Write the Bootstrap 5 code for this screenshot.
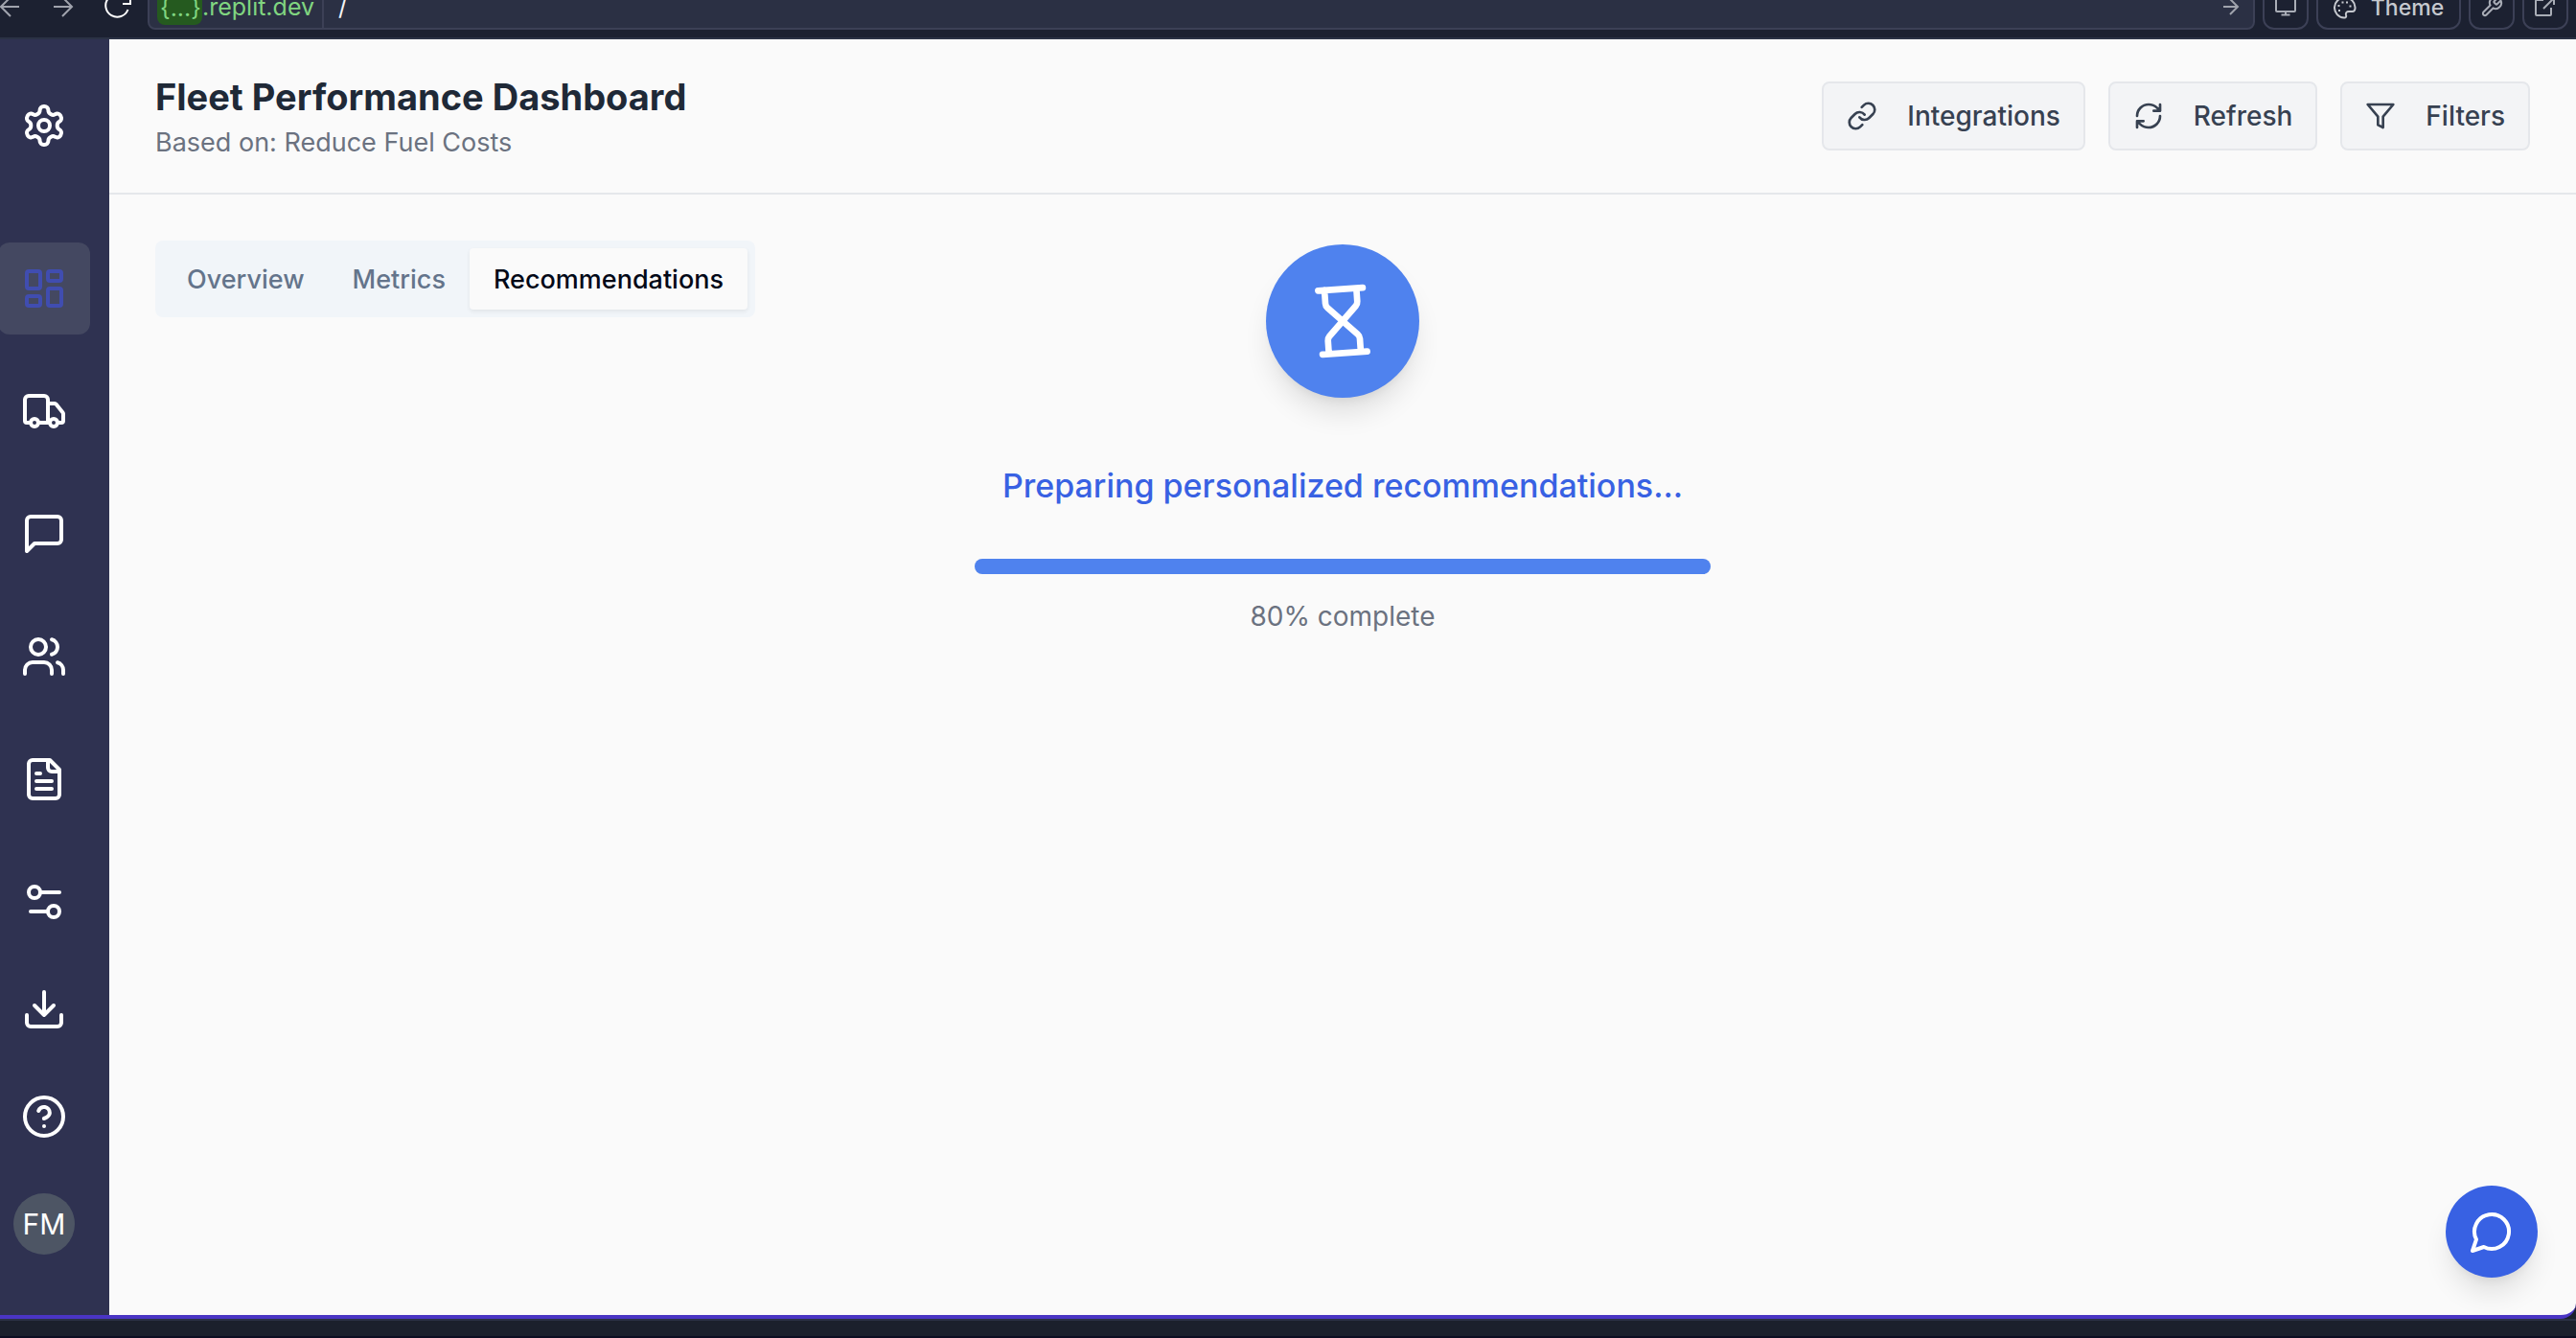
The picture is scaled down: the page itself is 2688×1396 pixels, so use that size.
<!DOCTYPE html>
<html lang="en">
<head>
<meta charset="utf-8">
<meta name="viewport" content="width=device-width, initial-scale=1">
<title>Fleet Performance Dashboard</title>
<link href="https://cdn.jsdelivr.net/npm/bootstrap@5.3.0/dist/css/bootstrap.min.css" rel="stylesheet">
<style>
  body { font-family: Inter, "Liberation Sans", sans-serif; background: #1b202c; }
  svg { fill: none; stroke: currentColor; stroke-width: 2; stroke-linecap: round; stroke-linejoin: round; flex-shrink: 0; }
  button { background: none; border: 0; padding: 0; }

  /* browser bar, scrolled partly out of view */
  .browser-bar { height: 41px; background: #1c2131; border-bottom: 2px solid #2b3245; color: #a9adb6; }
  .browser-row { height: 48px; margin-top: -17px; gap: 8px; padding-right: 8px; }
  .browser-nav { width: 146px; gap: 32px; }
  .browser-nav button { width: 24px; color: #a0a3ad; }
  .browser-nav .reload { color: #fff; }
  .browser-bar svg { width: 24px; height: 24px; stroke-width: 2; stroke-linecap: butt; stroke-linejoin: miter; display: block; }
  .url-field { background: #2b3044; border: 2px solid #3c4056; border-radius: 8px; font-size: 25px; padding-right: 11px; }
  .url-field button { color: #a0a3ad; }
  .url-host { color: #80d580; border-right: 2px solid #3c4056; padding: 2px 8px 0; }
  .url-chip { background: #255a1f; border-radius: 8px; padding: 0 3px; width: 47px; height: 36px; line-height: 36px; text-align: center; }
  .url-path { color: #f4f5f7; background: transparent; padding: 2px 0 0 15px; border: 0; outline: 0; min-width: 0; }
  .tool-btn { border: 2px solid #3c4056; border-radius: 12px; width: 48px; color: #a9adb6; }
  .tool-theme { width: 151px; gap: 15px; color: #c6c9cf; font-size: 23px; font-weight: 500; padding-top: 2px; }

  .app-frame { min-height: 0; background: #fafafa; border-bottom: 4px solid #4a35c4; border-bottom-right-radius: 16px; }
  .side-rail { width: 114px; background: #2f3251; padding: 66px 20px 63px 0; }
  .side-rail svg { width: 48px; height: 48px; }
  .side-rail a { color: #fff; }
  .side-main { gap: 32px; margin-top: 98px; }
  .side-item { width: 96px; height: 96px; border-radius: 12px; }
  .side-rail .side-item.active { background: #444861; color: #404db0; }
  .side-foot { gap: 48px; }
  .side-small { width: 64px; height: 64px; }
  .avatar { background: #4d5564; border-radius: 50%; font-size: 30px; text-decoration: none; }

  .page-head { height: 162px; border-bottom: 2px solid #e5e7eb; padding: 0 48px; }
  .page-title { font-size: 38px; line-height: 56px; font-weight: 700; color: #1f2937; }
  .page-sub { font-size: 27px; line-height: 40px; color: #6b7280; }
  .head-btn { height: 72px; padding: 0 24px; gap: 31px; border: 2px solid #e5e7eb; border-radius: 8px; background: #f3f4f6; color: #374151; font-size: 28px; font-weight: 500; }
  .head-btn svg { width: 32px; height: 32px; }

  .page-body { padding: 48px 48px 0; }
  .tab-set { background: #f1f5f9; border-radius: 8px; padding: 8px; height: 80px; }
  .tab-set .nav-link { color: #64748b; font-size: 27px; font-weight: 500; padding: 2px 25px 0; border-radius: 4px; height: 64px; }
  .tab-set .nav-link.active { background: #fafafa; color: #020817; box-shadow: 0 2px 4px rgba(0,0,0,.07); }

  .loader-disc { width: 160px; height: 160px; background: #4f82ee; color: #fff; margin-top: -76px; }
  .loader-disc svg { width: 80px; height: 80px; rotate: -4deg; }
  .soft-lift { box-shadow: 0 20px 30px -6px rgba(0,0,0,.12), 0 8px 12px -8px rgba(0,0,0,.1); }
  .loader-title { font-size: 34px; line-height: 48px; font-weight: 500; color: #3861e3; margin-top: 68px; }
  .loader-bar { width: 768px; max-width: 100%; height: 16px; border-radius: 8px; margin-top: 52px; }
  .loader-bar .progress-bar { background: #4f82ee; width: 100%; }
  .loader-note { font-size: 28px; line-height: 40px; color: #6b7280; margin-top: 24px; }
  .chat-fab { position: absolute; right: 40px; bottom: 39px; width: 96px; height: 96px; background: #3861e3; color: #fff; }
  .chat-fab svg { width: 48px; height: 48px; }
  .os-strip { height: 20px; border-top: 2px solid #2b3245; border-bottom: 2px solid #0c0e22; }
</style>
</head>
<body class="vh-100 d-flex flex-column overflow-hidden">

<header class="browser-bar overflow-hidden flex-shrink-0">
  <div class="browser-row d-flex align-items-stretch">
    <nav class="browser-nav d-flex align-items-center" aria-label="Browser">
      <button type="button" aria-label="Back"><svg viewBox="0 0 24 24"><path d="M20 12H1M11 2 1 12l10 10"/></svg></button>
      <button type="button" aria-label="Forward"><svg viewBox="0 0 24 24"><path d="M0 12h19M9 2l10 10L9 22"/></svg></button>
      <button type="button" class="reload" aria-label="Reload"><svg viewBox="0 0 24 24" overflow="visible"><path d="M19 2.500A12 12 0 1 0 21.500 15M16 9h8V1"/></svg></button>
    </nav>
    <div class="url-field d-flex align-items-center flex-fill">
      <div class="url-host d-flex align-items-center h-100"><span class="url-chip">{...}</span><span>.replit.dev</span></div>
      <input class="url-path flex-fill" type="text" value="/" aria-label="Path">
      <button type="button" aria-label="Go"><svg viewBox="0 0 24 24"><path d="M4 12h15M11 4l8 8-8 8"/></svg></button>
    </div>
    <button type="button" class="tool-btn d-flex align-items-center justify-content-center" aria-label="Devices"><svg viewBox="0 0 24 24"><path d="M3 2h18q1 0 1 1v13q0 1-1 1H3q-1 0-1-1V3q0-1 1-1ZM12 17v3M7.500 20.500h9"/></svg></button>
    <button type="button" class="tool-btn tool-theme d-flex align-items-center justify-content-center"><svg viewBox="0 0 24 24"><path d="M12 1.500a10.500 10.500 0 0 0-1 21c2 .2 2.500-1.200 2-3-.5-2 .5-3.500 3-3.500h3.500c2 0 3.300-1.500 3-4.500A10.500 10.500 0 0 0 12 1.500Z"/><path d="M6 14v2M5.500 9v2M9.500 5.500v2M14 5.500v2M17.500 9.500v2"/></svg><span>Theme</span></button>
    <button type="button" class="tool-btn d-flex align-items-center justify-content-center" aria-label="Tools"><svg viewBox="0 0 24 24"><path d="M14.700 6.300a1 1 0 0 0 0 1.400l1.600 1.600a1 1 0 0 0 1.400 0l3.800-3.800a6 6 0 0 1-8 8l-7 7a2.100 2.100 0 0 1-3-3l7-7a6 6 0 0 1 8-8z"/></svg></button>
    <button type="button" class="tool-btn d-flex align-items-center justify-content-center" aria-label="Open in new tab"><svg viewBox="0 0 24 24"><path d="M10 5H3q-1 0-1 1v14q0 1 1 1h14q1 0 1-1v-7M14 3h7v7M21 3 10 14"/></svg></button>
  </div>
</header>

<div class="app-frame d-flex flex-fill position-relative overflow-hidden">
  <aside class="side-rail d-flex flex-column align-items-end flex-shrink-0">
    <a href="#" class="side-item d-flex justify-content-center h-auto" aria-label="Settings"><svg viewBox="0 0 24 24"><path d="M12.220 2h-.44a2 2 0 0 0-2 2v.18a2 2 0 0 1-1 1.730l-.43.25a2 2 0 0 1-2 0l-.15-.08a2 2 0 0 0-2.730.73l-.22.38a2 2 0 0 0 .73 2.730l.15.1a2 2 0 0 1 1 1.720v.51a2 2 0 0 1-1 1.740l-.15.09a2 2 0 0 0-.73 2.730l.22.38a2 2 0 0 0 2.730.73l.15-.08a2 2 0 0 1 2 0l.43.25a2 2 0 0 1 1 1.730V20a2 2 0 0 0 2 2h.44a2 2 0 0 0 2-2v-.18a2 2 0 0 1 1-1.730l.43-.25a2 2 0 0 1 2 0l.15.08a2 2 0 0 0 2.730-.73l.22-.39a2 2 0 0 0-.73-2.730l-.15-.08a2 2 0 0 1-1-1.740v-.5a2 2 0 0 1 1-1.740l.15-.09a2 2 0 0 0 .73-2.730l-.22-.38a2 2 0 0 0-2.730-.73l-.15.08a2 2 0 0 1-2 0l-.43-.25a2 2 0 0 1-1-1.730V4a2 2 0 0 0-2-2z"/><circle cx="12" cy="12" r="3"/></svg></a>
    <nav class="side-main d-flex flex-column" aria-label="Main">
      <a href="#" class="side-item active d-flex align-items-center justify-content-center" aria-label="Dashboard"><svg viewBox="0 0 24 24"><rect x="3" y="3" width="7" height="9" rx="1"/><rect x="14" y="3" width="7" height="5" rx="1"/><rect x="14" y="12" width="7" height="9" rx="1"/><rect x="3" y="16" width="7" height="5" rx="1"/></svg></a>
      <a href="#" class="side-item d-flex align-items-center justify-content-center" aria-label="Vehicles"><svg viewBox="0 0 24 24"><path d="M14 18V6a2 2 0 0 0-2-2H4a2 2 0 0 0-2 2v11a1 1 0 0 0 1 1h2M15 18H9M19 18h2a1 1 0 0 0 1-1v-3.650a1 1 0 0 0-.22-.624l-3.480-4.350A1 1 0 0 0 17.520 8H14"/><circle cx="17" cy="18" r="2"/><circle cx="7" cy="18" r="2"/></svg></a>
      <a href="#" class="side-item d-flex align-items-center justify-content-center" aria-label="Messages"><svg viewBox="0 0 24 24"><path d="M21 15a2 2 0 0 1-2 2H7l-4 4V5a2 2 0 0 1 2-2h14a2 2 0 0 1 2 2z"/></svg></a>
      <a href="#" class="side-item d-flex align-items-center justify-content-center" aria-label="Team"><svg viewBox="0 0 24 24"><path d="M16 21v-2a4 4 0 0 0-4-4H6a4 4 0 0 0-4 4v2"/><circle cx="9" cy="7" r="4"/><path d="M22 21v-2a4 4 0 0 0-3-3.870M16 3.130a4 4 0 0 1 0 7.750"/></svg></a>
      <a href="#" class="side-item d-flex align-items-center justify-content-center" aria-label="Reports"><svg viewBox="0 0 24 24"><path d="M15 2H6a2 2 0 0 0-2 2v16a2 2 0 0 0 2 2h12a2 2 0 0 0 2-2V7Z"/><path d="M14 2v4a2 2 0 0 0 2 2h4M10 9H8M16 13H8M16 17H8"/></svg></a>
      <a href="#" class="side-item d-flex align-items-center justify-content-center" aria-label="Controls"><svg viewBox="0 0 24 24"><path d="M20 7h-9M14 17H5"/><circle cx="17" cy="17" r="3"/><circle cx="7" cy="7" r="3"/></svg></a>
    </nav>
    <div class="side-foot d-flex flex-column align-items-center mt-auto side-item h-auto">
      <a href="#" class="side-small d-flex align-items-center justify-content-center" aria-label="Download"><svg viewBox="0 0 24 24"><path d="M21 15v4a2 2 0 0 1-2 2H5a2 2 0 0 1-2-2v-4M7 10l5 5 5-5M12 15V3"/></svg></a>
      <a href="#" class="side-small d-flex align-items-center justify-content-center" aria-label="Help"><svg viewBox="0 0 24 24"><circle cx="12" cy="12" r="10"/><path d="M9.090 9a3 3 0 0 1 5.830 1c0 2-3 3-3 3M12 17h.01"/></svg></a>
      <a href="#" class="side-small avatar d-flex align-items-center justify-content-center">FM</a>
    </div>
  </aside>

  <main class="flex-fill d-flex flex-column">
    <div class="page-head d-flex align-items-center justify-content-between">
      <div>
        <h1 class="page-title m-0">Fleet Performance Dashboard</h1>
        <p class="page-sub m-0">Based on: Reduce Fuel Costs</p>
      </div>
      <div class="d-flex align-items-center gap-4">
        <button type="button" class="head-btn d-flex align-items-center"><svg viewBox="0 0 24 24"><path d="M10 13a5 5 0 0 0 7.540.54l3-3a5 5 0 0 0-7.070-7.070l-1.720 1.710"/><path d="M14 11a5 5 0 0 0-7.540-.54l-3 3a5 5 0 0 0 7.070 7.070l1.710-1.710"/></svg>Integrations</button>
        <button type="button" class="head-btn d-flex align-items-center"><svg viewBox="0 0 24 24"><path d="M3 12a9 9 0 0 1 9-9 9.750 9.750 0 0 1 6.740 2.740L21 8M21 3v5h-5M21 12a9 9 0 0 1-9 9 9.750 9.750 0 0 1-6.740-2.740L3 16M8 16H3v5"/></svg>Refresh</button>
        <button type="button" class="head-btn d-flex align-items-center"><svg viewBox="0 0 24 24"><path d="M22 3H2l8 9.460V19l4 2v-8.540z"/></svg>Filters</button>
      </div>
    </div>

    <div class="page-body">
      <div class="d-flex">
        <div class="tab-set nav d-inline-flex" role="tablist">
          <button type="button" class="nav-link" role="tab" aria-selected="false">Overview</button>
          <button type="button" class="nav-link" role="tab" aria-selected="false">Metrics</button>
          <button type="button" class="nav-link active" role="tab" aria-selected="true">Recommendations</button>
        </div>
      </div>
      <section class="d-flex flex-column align-items-center" aria-live="polite">
        <div class="loader-disc soft-lift rounded-circle d-flex align-items-center justify-content-center"><svg viewBox="0 0 24 24"><path d="M5 22h14M5 2h14M17 22v-4.172a2 2 0 0 0-.586-1.414L12 12l-4.414 4.414A2 2 0 0 0 7 17.828V22M7 2v4.172a2 2 0 0 0 .586 1.414L12 12l4.414-4.414A2 2 0 0 0 17 6.172V2"/></svg></div>
        <h2 class="loader-title mb-0">Preparing personalized recommendations...</h2>
        <div class="progress loader-bar" role="progressbar" aria-label="Preparing recommendations" aria-valuenow="80" aria-valuemin="0" aria-valuemax="100"><div class="progress-bar"></div></div>
        <p class="loader-note mb-0">80% complete</p>
      </section>
    </div>
  </main>

  <button type="button" class="chat-fab soft-lift rounded-circle d-flex align-items-center justify-content-center" aria-label="Open chat"><svg viewBox="0 0 24 24"><path d="M7.900 20A9 9 0 1 0 4 16.100L2 22Z"/></svg></button>
</div>

<footer class="os-strip flex-shrink-0"></footer>
<script src="https://cdn.jsdelivr.net/npm/bootstrap@5.3.0/dist/js/bootstrap.bundle.min.js"></script>
</body>
</html>
